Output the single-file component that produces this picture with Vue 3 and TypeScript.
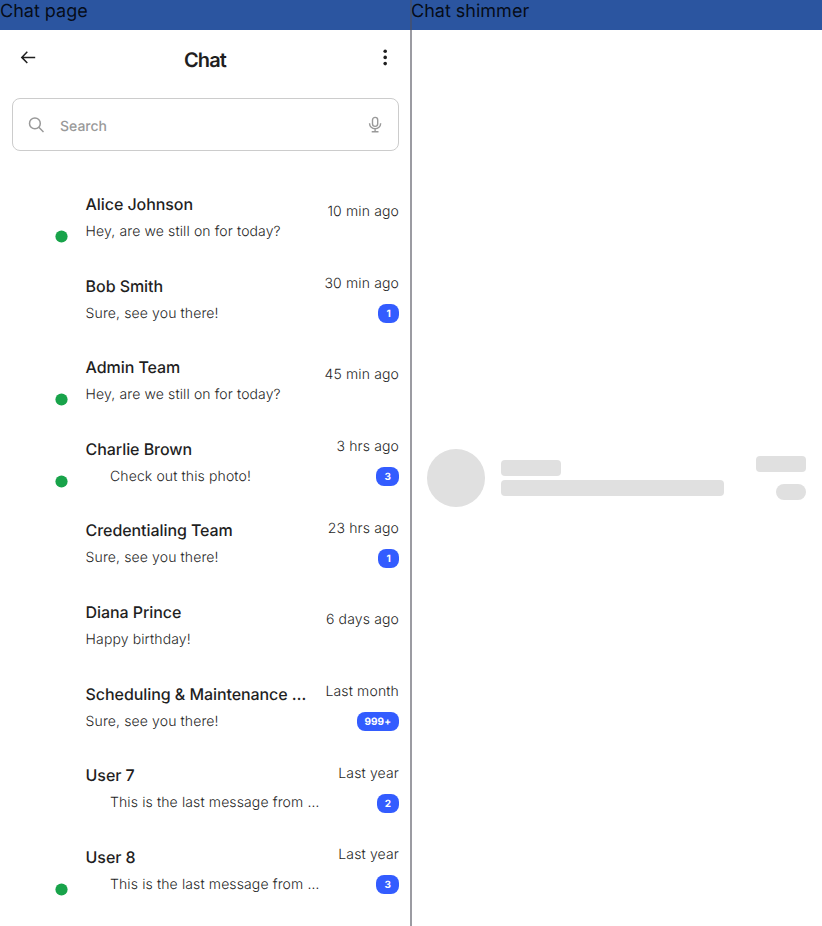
<script setup lang="ts">
interface Chat {
  name: string
  message: string
  time: string
  unread?: string
  online?: boolean
  attachment?: boolean
}

const chats: Chat[] = [
  { name: 'Alice Johnson', message: 'Hey, are we still on for today?', time: '10 min ago', online: true },
  { name: 'Bob Smith', message: 'Sure, see you there!', time: '30 min ago', unread: '1' },
  { name: 'Admin Team', message: 'Hey, are we still on for today?', time: '45 min ago', online: true },
  { name: 'Charlie Brown', message: 'Check out this photo!', time: '3 hrs ago', unread: '3', online: true, attachment: true },
  { name: 'Credentialing Team', message: 'Sure, see you there!', time: '23 hrs ago', unread: '1' },
  { name: 'Diana Prince', message: 'Happy birthday!', time: '6 days ago' },
  { name: 'Scheduling & Maintenance …', message: 'Sure, see you there!', time: 'Last month', unread: '999+' },
  { name: 'User 7', message: 'This is the last message from …', time: 'Last year', unread: '2', attachment: true },
  { name: 'User 8', message: 'This is the last message from …', time: 'Last year', unread: '3', online: true, attachment: true },
]
</script>

<template>
  <main class="board">
    <section class="panel">
      <header class="caption">Chat page</header>
      <div class="appbar">
        <svg class="back" viewBox="0 0 16 14" width="16" height="14">
          <path d="M15.2 6.4H2.2M7.3 0.8L1.8 6.4L7.3 12" fill="none" stroke="#1f1f1f" stroke-width="1.5" />
        </svg>
        <h1 class="title">Chat</h1>
        <svg class="more" viewBox="0 0 5 18" width="5" height="18">
          <circle cx="2.2" cy="2.2" r="1.8" /><circle cx="2.2" cy="8.4" r="1.8" /><circle cx="2.2" cy="14.6" r="1.8" />
        </svg>
      </div>
      <div class="search">
        <svg viewBox="0 0 16 16" width="16" height="16" fill="none" stroke="#999" stroke-width="1.5">
          <circle cx="6.9" cy="6.4" r="5.4" /><path d="M10.8 10.3L15.5 15" />
        </svg>
        <span class="placeholder">Search</span>
        <svg viewBox="0 0 14 18" width="14" height="18" fill="none" stroke="#999" stroke-width="1.4">
          <rect x="4.5" y="1.4" width="5.2" height="9" rx="2.6" />
          <path d="M1.6 7.2V7.7a5.5 5.1 0 0 0 11 0V7.2M7.1 12.8V15.7M3.7 15.8H10.5" />
        </svg>
      </div>
      <ul class="list">
        <li v-for="chat in chats" :key="chat.name" class="row">
          <div class="avatar">
            <svg v-if="chat.online" class="dot" viewBox="0 0 13 13" width="13" height="13">
              <circle cx="6.5" cy="6.5" r="6.1" />
            </svg>
          </div>
          <div class="body">
            <div class="name">{{ chat.name }}</div>
            <div class="message" :class="{ indented: chat.attachment }">{{ chat.message }}</div>
          </div>
          <div class="meta" :class="{ single: !chat.unread }">
            <span class="time">{{ chat.time }}</span>
            <span v-if="chat.unread" class="badge">{{ chat.unread }}</span>
          </div>
        </li>
      </ul>
    </section>
    <section class="panel">
      <header class="caption">Chat shimmer</header>
      <div class="shimmer">
        <div class="bone circle" />
        <div class="lines">
          <div class="bone short" />
          <div class="bone long" />
        </div>
        <div class="side">
          <div class="bone stamp" />
          <div class="bone pill" />
        </div>
      </div>
    </section>
    <div class="divider" />
  </main>
</template>

<style>
body {
  background: #fff;
}
</style>

<style scoped>
.board {
  position: relative;
  display: flex;
  width: 822px;
  height: 926px;
  overflow: hidden;
  font-family: Inter, 'Liberation Sans', sans-serif;
  color: #1f1f1f;
  text-rendering: geometricPrecision;
}
.panel {
  display: flex;
  flex-direction: column;
  width: 411px;
  flex: none;
}
.caption {
  box-sizing: border-box;
  height: 30px;
  background: #2b55a0;
  color: rgba(0, 0, 0, 0.87);
  font-size: 18px;
  line-height: 24px;
  white-space: nowrap;
}
.appbar {
  display: grid;
  grid-template-columns: 24px 1fr 24px;
  align-items: center;
  box-sizing: border-box;
  height: 56px;
  padding: 0 14px 0 20px;
}
.back {
  margin-top: -1px;
}
.title {
  margin: 4px 0 0 -7px;
  text-align: center;
  font-size: 20px;
  font-weight: 600;
  letter-spacing: -0.9px;
  line-height: 24px;
}
.more {
  margin-left: 10px;
  fill: #1f1f1f;
}
.search {
  display: flex;
  align-items: center;
  box-sizing: border-box;
  width: 387px;
  height: 53px;
  margin: 12px 0 0 12px;
  padding: 0 16px 0 15px;
  border: 1px solid #ccc;
  border-radius: 8px;
}
.placeholder {
  flex: 1;
  margin: 4px 0 0 16px;
  color: #999;
  font-size: 14px;
  font-weight: 500;
  letter-spacing: 0;
  line-height: 20px;
}
.list {
  margin: 26px 0 0;
  padding: 0;
  list-style: none;
}
.row {
  display: flex;
  box-sizing: border-box;
  height: 81.6px;
  padding: 12px 12px 0;
}
.avatar {
  display: flex;
  align-items: flex-end;
  justify-content: flex-end;
  box-sizing: border-box;
  width: 57.6px;
  height: 57.6px;
  padding: 0 1.6px 3.6px 0;
}
.dot {
  fill: #18a34a;
}
.body {
  flex: 1;
  margin-left: 16px;
  white-space: nowrap;
}
.name {
  margin-top: 3px;
  font-size: 16px;
  font-weight: 500;
  letter-spacing: -0.07px;
  line-height: 24px;
}
.message {
  margin-top: 6px;
  font-size: 14px;
  font-weight: 300;
  letter-spacing: 0.12px;
  line-height: 20px;
}
.indented {
  padding-left: 24.4px;
}
.meta {
  display: flex;
  flex-direction: column;
  align-items: flex-end;
  padding-top: 3.4px;
}
.single {
  padding-top: 13px;
}
.time {
  font-size: 14px;
  font-weight: 300;
  letter-spacing: 0.14px;
  line-height: 20px;
  white-space: nowrap;
}
.badge {
  box-sizing: border-box;
  min-width: 20.8px;
  height: 19px;
  margin-top: 10px;
  padding: 1px 8px 0;
  border-radius: 8px;
  background: #335cff;
  color: #fff;
  font-size: 10px;
  font-weight: 700;
  letter-spacing: 0.05px;
  line-height: 19px;
  text-align: center;
}
.shimmer {
  display: flex;
  align-items: center;
  flex: 1;
  padding: 0 16px;
}
.bone {
  border-radius: 4px;
  background: #e0e0e0;
}
.circle {
  width: 57.6px;
  height: 57.6px;
  border-radius: 50%;
}
.lines {
  flex: 1;
  margin-left: 16px;
}
.short {
  width: 60px;
  height: 16px;
}
.long {
  width: 223.5px;
  height: 16px;
  margin-top: 4px;
}
.side {
  display: flex;
  flex-direction: column;
  align-items: flex-end;
  gap: 12px;
}
.stamp {
  width: 50px;
  height: 16px;
}
.pill {
  width: 30px;
  height: 16px;
  border-radius: 8px;
}
.divider {
  position: absolute;
  top: 0;
  bottom: 0;
  left: 410px;
  width: 2px;
  background: rgba(79, 79, 91, 0.57);
}
</style>
